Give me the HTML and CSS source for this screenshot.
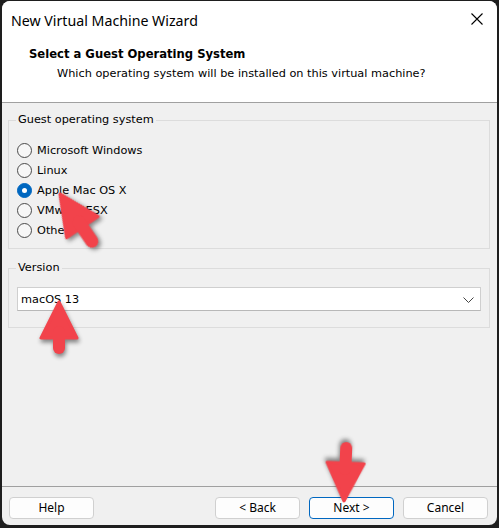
FILE: index.html
```html
<!DOCTYPE html>
<html>
<head>
<meta charset="utf-8">
<link rel="stylesheet" href="styles.css">
</head>
<body>
<div class="window">
  <div class="titlebar">
    <span class="title">New Virtual Machine Wizard</span>
    <svg class="close" width="12" height="12" viewBox="0 0 12 12"><path d="M0.5 0.5 L11.5 11.5 M11.5 0.5 L0.5 11.5" stroke="#000" stroke-width="1.1" fill="none"/></svg>
  </div>
  <div class="header">
    <div class="h-title">Select a Guest Operating System</div>
    <div class="h-sub">Which operating system will be installed on this virtual machine?</div>
  </div>
  <div class="content">
    <fieldset class="group os-group">
      <legend>Guest operating system</legend>
      <div class="radio-row"><span class="radio"></span><span>Microsoft Windows</span></div>
      <div class="radio-row"><span class="radio"></span><span>Linux</span></div>
      <div class="radio-row"><span class="radio checked"></span><span>Apple Mac OS X</span></div>
      <div class="radio-row"><span class="radio"></span><span>VMware ESX</span></div>
      <div class="radio-row"><span class="radio"></span><span>Other</span></div>
    </fieldset>
    <fieldset class="group version-group">
      <legend>Version</legend>
      <div class="combo">
        <span>macOS 13</span>
        <svg class="chev" width="11" height="6" viewBox="0 0 11 6"><path d="M0.5 0.5 L5.5 5.5 L10.5 0.5" stroke="#444" stroke-width="1" fill="none"/></svg>
      </div>
    </fieldset>
  </div>
  <div class="footer">
    <button class="btn">Help</button>
    <div class="spacer"></div>
    <button class="btn">&lt; Back</button>
    <button class="btn default">Next &gt;</button>
    <button class="btn">Cancel</button>
  </div>
  <svg class="arrows" width="499" height="528" viewBox="0 0 499 528">
    <g class="arrow" transform="translate(60,194) rotate(-34)">
      <polygon points="0,0 -19,40 19,40"/>
      <line x1="0" y1="34" x2="0" y2="57" stroke-width="13" stroke-linecap="round"/>
    </g>
    <g class="arrow" transform="translate(59,302) rotate(0)">
      <polygon points="0,0 -18,36 18,36"/>
      <line x1="0" y1="30" x2="0" y2="46" stroke-width="12" stroke-linecap="round"/>
    </g>
    <g class="arrow" transform="translate(344,501) rotate(182.4)">
      <polygon points="0,0 -18.5,38 18.5,38"/>
      <line x1="0" y1="32" x2="0" y2="53" stroke-width="12" stroke-linecap="round"/>
    </g>
  </svg>
</div>
</body>
</html>
```

FILE: styles.css
```css
html, body {
  margin: 0;
  padding: 0;
}
body {
  width: 499px;
  height: 528px;
  background: #1e1e1e;
  overflow: hidden;
  position: relative;
}
.window {
  position: relative;
  margin: 1px 0 0 2px;
  width: 495px;
  height: 524px;
  border-radius: 8px;
  overflow: hidden;
  background: #f0f0f0;
  display: flex;
  flex-direction: column;
  font-family: "DejaVu Sans", sans-serif;
  font-size: 11.3px;
  color: #000;
}
.titlebar {
  height: 38px;
  background: #fff;
  display: flex;
  align-items: center;
  padding: 0 14px 0 9px;
  flex-shrink: 0;
}
.title {
  font-family: "Noto Sans", sans-serif;
  font-size: 14.2px;
  flex: 1;
}
.close {
  display: block;
  margin-top: -3px;
}
.header {
  background: #fff;
  padding: 5px 0 0 0;
  box-sizing: border-box;
  border-bottom: 1px solid #a0a0a0;
  flex-shrink: 0;
  height: 64px;
}
.h-title {
  font-weight: bold;
  line-height: 20px;
  padding-left: 27px;
  font-size: 11.6px;
}
.h-sub {
  line-height: 20px;
  padding-left: 55px;
}
.content {
  flex: 1;
  display: flex;
  flex-direction: column;
}
.group {
  margin: 0 7px 0 6px;
  border: 1px solid #dcdcdc;
  padding: 0 8px;
  min-width: 0;
}
.group legend {
  padding: 0 2px;
  margin-left: -1px;
  line-height: 14px;
}
.os-group {
  margin-top: 10px;
  padding-top: 13px;
  padding-bottom: 8px;
}
.radio-row {
  height: 20px;
  display: flex;
  align-items: center;
  gap: 5px;
}
.radio {
  width: 13px;
  height: 13px;
  border: 1px solid #4a4a4a;
  border-radius: 50%;
  background: #f7f7f7;
  box-sizing: content-box;
  flex-shrink: 0;
}
.radio.checked {
  background: #0067c0;
  border-color: #0067c0;
  position: relative;
}
.radio.checked::after {
  content: "";
  position: absolute;
  left: 4px;
  top: 4px;
  width: 5px;
  height: 5px;
  border-radius: 50%;
  background: #fff;
}
.version-group {
  margin-top: 12px;
  padding-top: 12px;
  padding-bottom: 16px;
}
.combo {
  height: 24px;
  box-sizing: border-box;
  background: #fff;
  border: 1px solid #cfcfcf;
  border-bottom-color: #b8b8b8;
  display: flex;
  align-items: center;
  justify-content: space-between;
  padding: 0 6px 0 3px;
}
.chev {
  display: block;
  margin-top: 1px;
}
.footer {
  flex-shrink: 0;
  border-top: 1px solid #a0a0a0;
  height: 39px;
  box-sizing: border-box;
  padding: 10px 9px 0 7px;
  display: flex;
  align-items: flex-start;
  gap: 9px;
}
.spacer {
  flex: 1;
}
.btn {
  width: 85px;
  height: 22px;
  box-sizing: border-box;
  border: 1px solid #d0d0d0;
  border-radius: 4px;
  background: #fdfdfd;
  font-family: "Noto Sans", sans-serif;
  font-size: 12px;
  color: #000;
  padding: 0;
  line-height: 20px;
}
.btn.default {
  border-color: #0067c0;
}
.arrows {
  position: absolute;
  left: -2px;
  top: -1px;
  pointer-events: none;
}
.arrow {
  fill: #f2434b;
  stroke: #f2434b;
  filter: drop-shadow(1px 3px 2px rgba(0, 0, 0, 0.45));
}
.arrow polygon {
  stroke-width: 3;
  stroke-linejoin: round;
}
```
